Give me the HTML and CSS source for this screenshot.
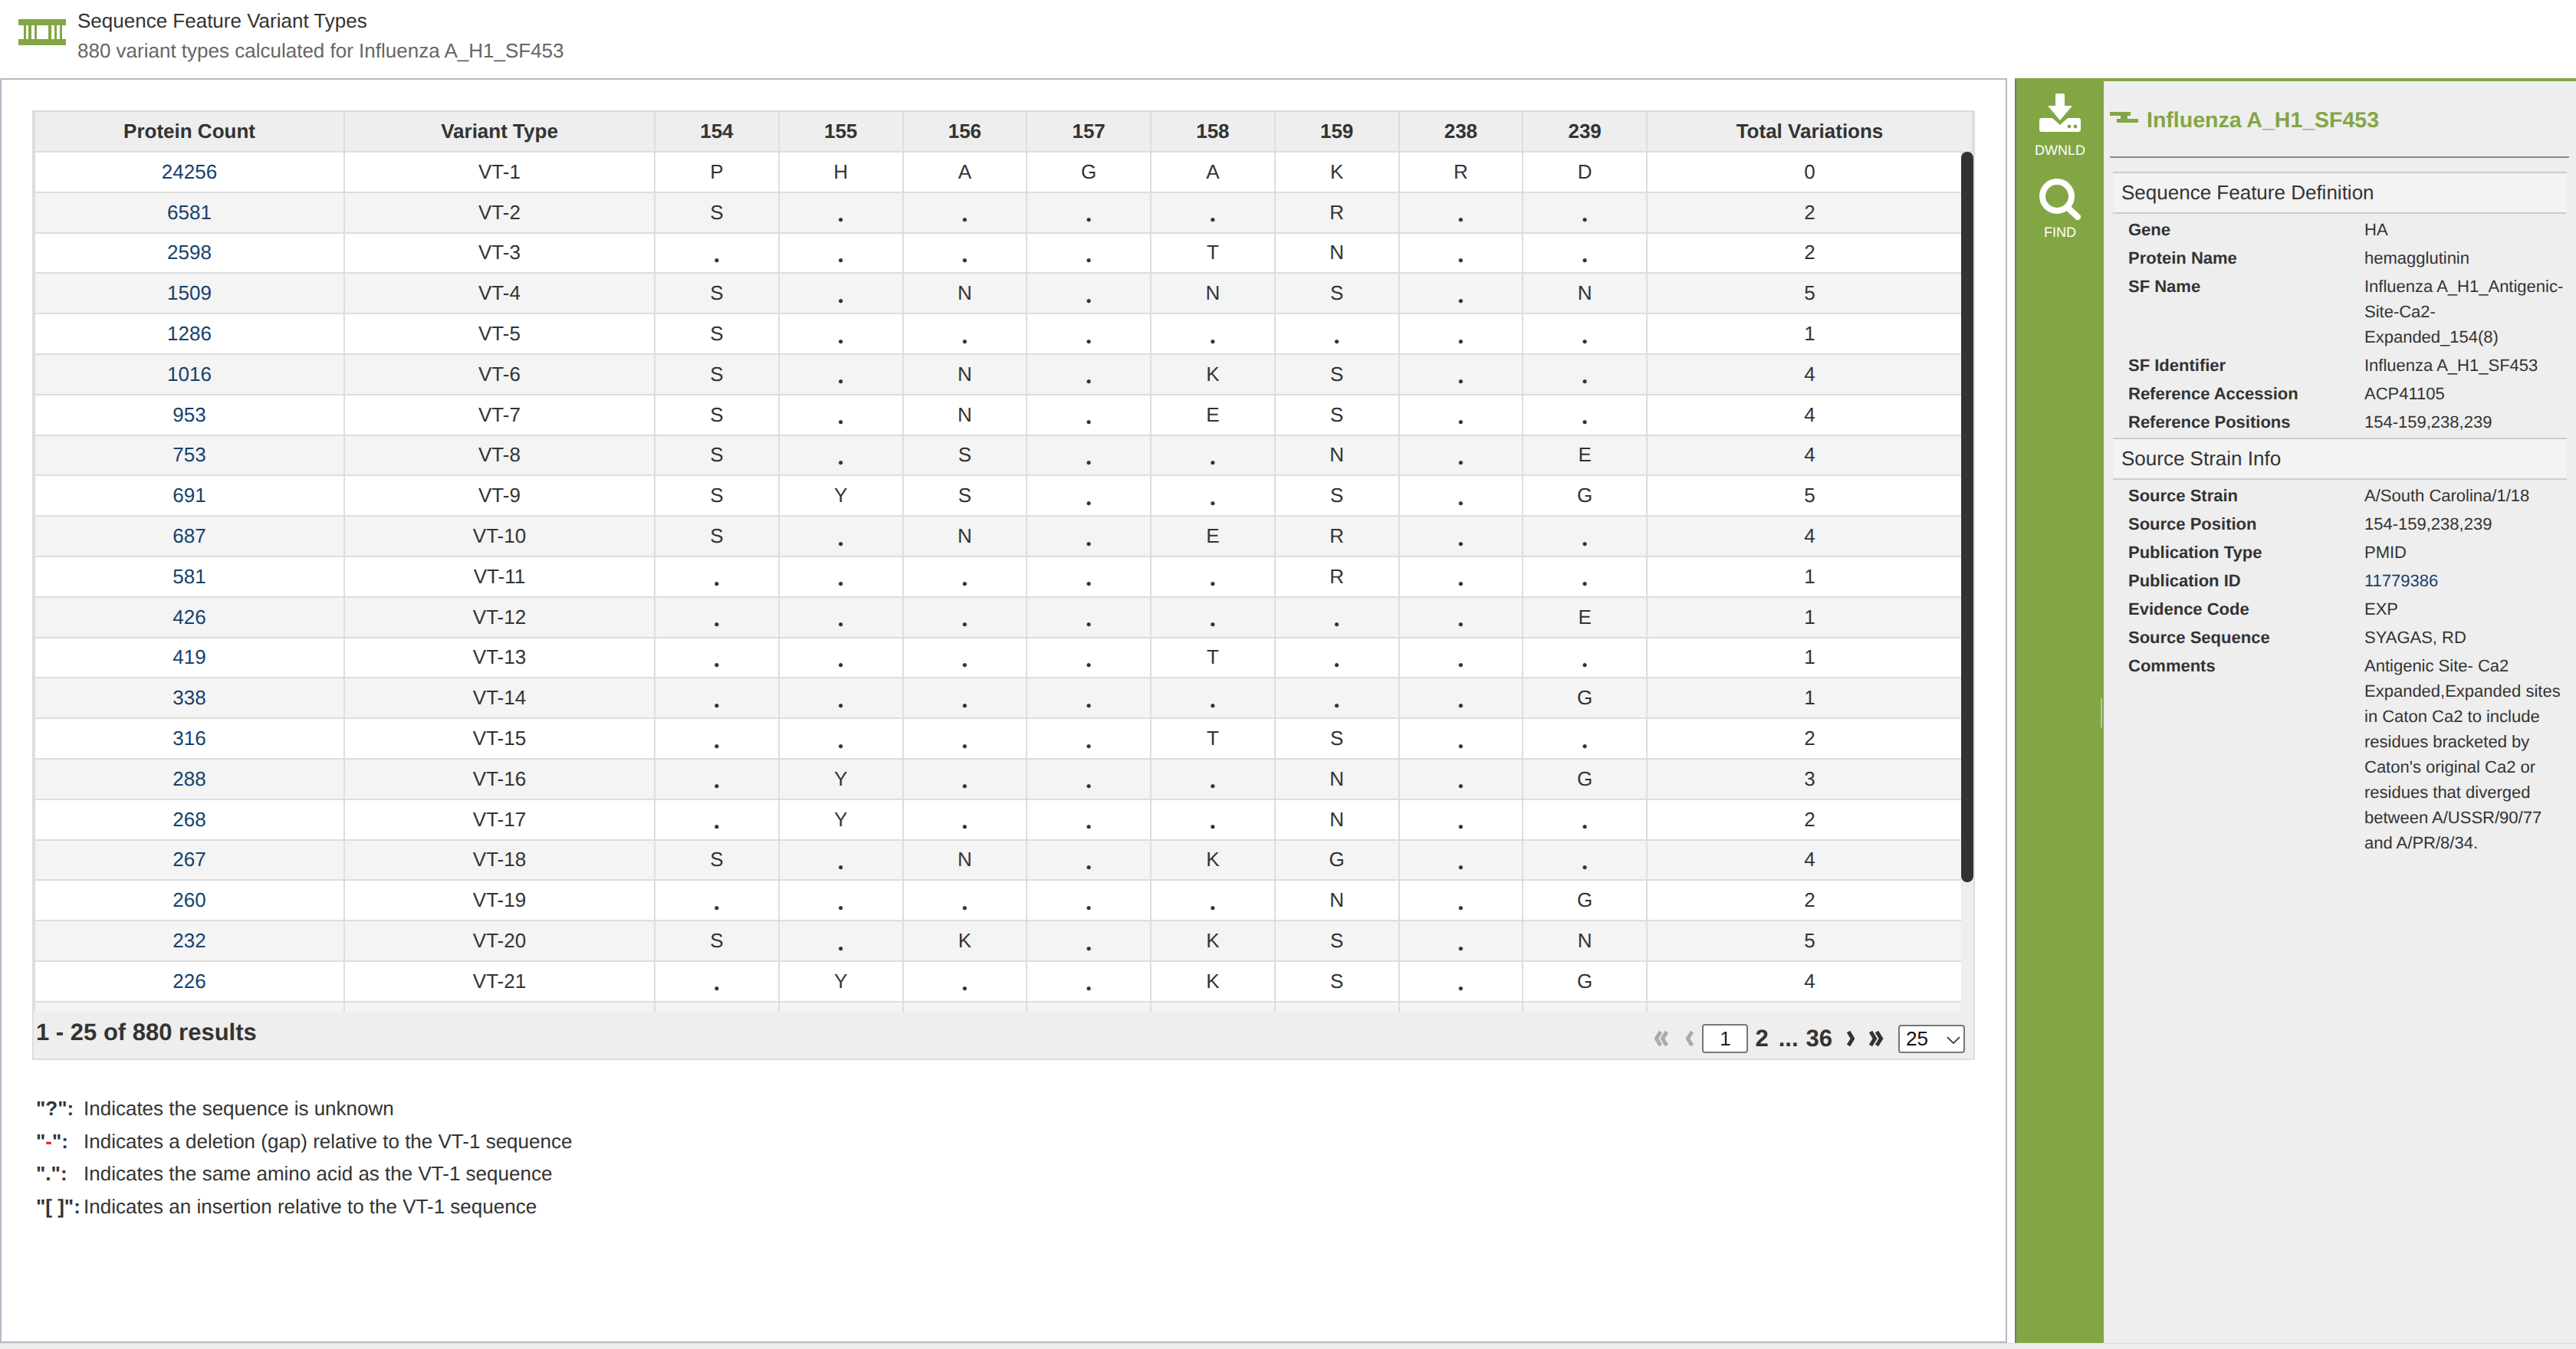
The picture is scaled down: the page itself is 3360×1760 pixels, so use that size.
FILE: index.html
```html
<!DOCTYPE html>
<html>
<head>
  <title>Sequence Feature Variant Types</title>
  <link rel="stylesheet" href="styles.css">
</head>
<body>
  <div class="page-header">
    <svg class="header-icon" width="62" height="34" viewBox="0 0 62 34">
      <rect x="0" y="0" width="62" height="8" fill="#83a645"/>
      <rect x="0" y="26" width="62" height="8" fill="#83a645"/>
      <rect x="7" y="8" width="3" height="18" fill="#83a645"/>
      <rect x="13" y="8" width="4" height="18" fill="#83a645"/>
      <rect x="21" y="8" width="3" height="18" fill="#83a645"/>
      <rect x="39" y="8" width="4" height="18" fill="#83a645"/>
      <rect x="47" y="8" width="3" height="18" fill="#83a645"/>
      <rect x="54" y="8" width="3" height="18" fill="#83a645"/>
    </svg>
    <div>
      <div class="page-title">Sequence Feature Variant Types</div>
      <div class="page-subtitle">880 variant types calculated for Influenza A_H1_SF453</div>
    </div>
  </div>

  <div class="main">
    <div class="content">
      <div class="grid-wrap">
        <div class="grid-scroll">
          <table class="grid">
            <colgroup>
              <col class="col-first"><col class="col-second">
              <col class="col-pos"><col class="col-pos"><col class="col-pos"><col class="col-pos">
              <col class="col-pos"><col class="col-pos"><col class="col-pos"><col class="col-pos">
              <col class="col-total">
            </colgroup>
            <thead>
              <tr><th>Protein Count</th><th>Variant Type</th><th>154</th><th>155</th><th>156</th><th>157</th><th>158</th><th>159</th><th>238</th><th>239</th><th>Total Variations</th></tr>
            </thead>
            <tbody>
              <tr><td><a href="#">24256</a></td><td>VT-1</td><td>P</td><td>H</td><td>A</td><td>G</td><td>A</td><td>K</td><td>R</td><td>D</td><td>0</td></tr>
              <tr><td><a href="#">6581</a></td><td>VT-2</td><td>S</td><td class="dot">.</td><td class="dot">.</td><td class="dot">.</td><td class="dot">.</td><td>R</td><td class="dot">.</td><td class="dot">.</td><td>2</td></tr>
              <tr><td><a href="#">2598</a></td><td>VT-3</td><td class="dot">.</td><td class="dot">.</td><td class="dot">.</td><td class="dot">.</td><td>T</td><td>N</td><td class="dot">.</td><td class="dot">.</td><td>2</td></tr>
              <tr><td><a href="#">1509</a></td><td>VT-4</td><td>S</td><td class="dot">.</td><td>N</td><td class="dot">.</td><td>N</td><td>S</td><td class="dot">.</td><td>N</td><td>5</td></tr>
              <tr><td><a href="#">1286</a></td><td>VT-5</td><td>S</td><td class="dot">.</td><td class="dot">.</td><td class="dot">.</td><td class="dot">.</td><td class="dot">.</td><td class="dot">.</td><td class="dot">.</td><td>1</td></tr>
              <tr><td><a href="#">1016</a></td><td>VT-6</td><td>S</td><td class="dot">.</td><td>N</td><td class="dot">.</td><td>K</td><td>S</td><td class="dot">.</td><td class="dot">.</td><td>4</td></tr>
              <tr><td><a href="#">953</a></td><td>VT-7</td><td>S</td><td class="dot">.</td><td>N</td><td class="dot">.</td><td>E</td><td>S</td><td class="dot">.</td><td class="dot">.</td><td>4</td></tr>
              <tr><td><a href="#">753</a></td><td>VT-8</td><td>S</td><td class="dot">.</td><td>S</td><td class="dot">.</td><td class="dot">.</td><td>N</td><td class="dot">.</td><td>E</td><td>4</td></tr>
              <tr><td><a href="#">691</a></td><td>VT-9</td><td>S</td><td>Y</td><td>S</td><td class="dot">.</td><td class="dot">.</td><td>S</td><td class="dot">.</td><td>G</td><td>5</td></tr>
              <tr><td><a href="#">687</a></td><td>VT-10</td><td>S</td><td class="dot">.</td><td>N</td><td class="dot">.</td><td>E</td><td>R</td><td class="dot">.</td><td class="dot">.</td><td>4</td></tr>
              <tr><td><a href="#">581</a></td><td>VT-11</td><td class="dot">.</td><td class="dot">.</td><td class="dot">.</td><td class="dot">.</td><td class="dot">.</td><td>R</td><td class="dot">.</td><td class="dot">.</td><td>1</td></tr>
              <tr><td><a href="#">426</a></td><td>VT-12</td><td class="dot">.</td><td class="dot">.</td><td class="dot">.</td><td class="dot">.</td><td class="dot">.</td><td class="dot">.</td><td class="dot">.</td><td>E</td><td>1</td></tr>
              <tr><td><a href="#">419</a></td><td>VT-13</td><td class="dot">.</td><td class="dot">.</td><td class="dot">.</td><td class="dot">.</td><td>T</td><td class="dot">.</td><td class="dot">.</td><td class="dot">.</td><td>1</td></tr>
              <tr><td><a href="#">338</a></td><td>VT-14</td><td class="dot">.</td><td class="dot">.</td><td class="dot">.</td><td class="dot">.</td><td class="dot">.</td><td class="dot">.</td><td class="dot">.</td><td>G</td><td>1</td></tr>
              <tr><td><a href="#">316</a></td><td>VT-15</td><td class="dot">.</td><td class="dot">.</td><td class="dot">.</td><td class="dot">.</td><td>T</td><td>S</td><td class="dot">.</td><td class="dot">.</td><td>2</td></tr>
              <tr><td><a href="#">288</a></td><td>VT-16</td><td class="dot">.</td><td>Y</td><td class="dot">.</td><td class="dot">.</td><td class="dot">.</td><td>N</td><td class="dot">.</td><td>G</td><td>3</td></tr>
              <tr><td><a href="#">268</a></td><td>VT-17</td><td class="dot">.</td><td>Y</td><td class="dot">.</td><td class="dot">.</td><td class="dot">.</td><td>N</td><td class="dot">.</td><td class="dot">.</td><td>2</td></tr>
              <tr><td><a href="#">267</a></td><td>VT-18</td><td>S</td><td class="dot">.</td><td>N</td><td class="dot">.</td><td>K</td><td>G</td><td class="dot">.</td><td class="dot">.</td><td>4</td></tr>
              <tr><td><a href="#">260</a></td><td>VT-19</td><td class="dot">.</td><td class="dot">.</td><td class="dot">.</td><td class="dot">.</td><td class="dot">.</td><td>N</td><td class="dot">.</td><td>G</td><td>2</td></tr>
              <tr><td><a href="#">232</a></td><td>VT-20</td><td>S</td><td class="dot">.</td><td>K</td><td class="dot">.</td><td>K</td><td>S</td><td class="dot">.</td><td>N</td><td>5</td></tr>
              <tr><td><a href="#">226</a></td><td>VT-21</td><td class="dot">.</td><td>Y</td><td class="dot">.</td><td class="dot">.</td><td>K</td><td>S</td><td class="dot">.</td><td>G</td><td>4</td></tr>
              <tr><td></td><td></td><td></td><td></td><td></td><td></td><td></td><td></td><td></td><td></td><td></td></tr>
            </tbody>
          </table>
        </div>
        <div class="scroll-track"><div class="scroll-thumb"></div></div>
        <div class="grid-footer">
          <div class="result-count">1 - 25 of 880 results</div>
          <div class="pager">
            <svg class="chev-double" width="19" height="20" viewBox="0 0 19 20"><path d="M9 1 3.5 10 9 19M17 1l-5.500 9 5.500 9" fill="none" stroke="#aaa" stroke-width="5"/></svg>
            <svg class="chev-prev" width="12" height="20" viewBox="0 0 12 20"><path d="M9 1 3.500 10 9 19" fill="none" stroke="#aaa" stroke-width="5"/></svg>
            <input class="page-input" type="text" value="1">
            <span class="page-two">2</span>
            <span class="page-dots">...</span>
            <span class="page-last">36</span>
            <svg class="chev-next" width="11" height="20" viewBox="0 0 11 20"><path d="M3 1l5.500 9L3 19" fill="none" stroke="#333" stroke-width="5"/></svg>
            <svg class="chev-double" width="19" height="20" viewBox="0 0 19 20"><path d="M2 1l5.500 9L2 19M10 1l5.500 9L10 19" fill="none" stroke="#333" stroke-width="5"/></svg>
            <div class="size-select">
              <select><option>25</option><option>50</option><option>100</option></select>
              <svg class="select-arrow" width="18" height="10" viewBox="0 0 18 10"><path d="M1 1l8 8 8-8" fill="none" stroke="#222" stroke-width="1.6"/></svg>
            </div>
          </div>
        </div>
      </div>

      <div class="legend">
        <b>"?":</b><span>Indicates the sequence is unknown</span>
        <b>"<span class="red">-</span>":</b><span>Indicates a deletion (gap) relative to the VT-1 sequence</span>
        <b>".":</b><span>Indicates the same amino acid as the VT-1 sequence</span>
        <b>"[ ]":</b><span>Indicates an insertion relative to the VT-1 sequence</span>
      </div>
    </div>

    <div class="side">
      <div class="toolbar">
        <div class="tool">
          <svg width="54" height="50" viewBox="0 0 54 50">
            <path d="M21 2a2 2 0 0 1 2-2h8a2 2 0 0 1 2 2v14h10L27 35 11 16h10z" fill="#fff"/>
            <path d="M3 32h14l10 9 10-9h14a3 3 0 0 1 3 3v12a3 3 0 0 1-3 3H3a3 3 0 0 1-3-3V35a3 3 0 0 1 3-3z" fill="#fff"/>
            <circle cx="39" cy="43" r="2.4" fill="#83a645"/>
            <circle cx="47" cy="43" r="2.4" fill="#83a645"/>
          </svg>
          <span>DWNLD</span>
        </div>
        <div class="tool tool-find">
          <svg width="54" height="54" viewBox="0 0 54 54">
            <circle cx="23" cy="23" r="19" fill="none" stroke="#fff" stroke-width="8"/>
            <path d="M36 37l14 13" fill="none" stroke="#fff" stroke-width="8" stroke-linecap="round"/>
          </svg>
          <span>FIND</span>
        </div>
        <div class="splitter"></div>
      </div>

      <div class="details">
        <div class="details-title">
          <svg width="37" height="14" viewBox="0 0 37 14">
            <rect x="0" y="0" width="27" height="5" fill="#83a645"/>
            <rect x="14" y="5" width="9" height="4" fill="#83a645"/>
            <rect x="9" y="9" width="28" height="5" fill="#83a645"/>
          </svg>
          <span>Influenza A_H1_SF453</span>
        </div>

        <div class="section-head">Sequence Feature Definition</div>
        <div class="info">
          <b>Gene</b><span>HA</span>
          <b>Protein Name</b><span>hemagglutinin</span>
          <b>SF Name</b><span>Influenza A_H1_Antigenic-<br>Site-Ca2-<br>Expanded_154(8)</span>
          <b>SF Identifier</b><span>Influenza A_H1_SF453</span>
          <b>Reference Accession</b><span>ACP41105</span>
          <b>Reference Positions</b><span>154-159,238,239</span>
        </div>

        <div class="section-head">Source Strain Info</div>
        <div class="info">
          <b>Source Strain</b><span>A/South Carolina/1/18</span>
          <b>Source Position</b><span>154-159,238,239</span>
          <b>Publication Type</b><span>PMID</span>
          <b>Publication ID</b><span><a href="#">11779386</a></span>
          <b>Evidence Code</b><span>EXP</span>
          <b>Source Sequence</b><span>SYAGAS, RD</span>
          <b>Comments</b><span>Antigenic Site- Ca2<br>Expanded,Expanded sites<br>in Caton Ca2 to include<br>residues bracketed by<br>Caton's original Ca2 or<br>residues that diverged<br>between A/USSR/90/77<br>and A/PR/8/34.</span>
        </div>
      </div>
    </div>
  </div>

  <div class="page-bottom"></div>
</body>
</html>
```

FILE: styles.css
```css
html, body {
  margin: 0;
  height: 1760px;
  overflow: hidden;
}

body {
  font-family: "Liberation Sans", Arial, sans-serif;
  font-size: 26px;
  color: #333;
  background: #fff;
  text-rendering: geometricPrecision;
}

a {
  color: #16416e;
  text-decoration: none;
}

/* page header */
.page-header {
  height: 102px;
  box-sizing: border-box;
  display: flex;
  align-items: flex-start;
  padding: 8px 0 0 24px;
  gap: 15px;
}

.header-icon {
  margin-top: 17px;
}

.page-title {
  line-height: 39px;
}

.page-subtitle {
  line-height: 39px;
  color: #666;
}

/* main split */
.main {
  display: flex;
  height: 1650px;
}

.content {
  width: 2618px;
  box-sizing: border-box;
  border: 2px solid #b5bac8;
  padding: 40px 0 0 40px;
}

.side {
  margin-left: 10px;
  flex: 1;
  display: flex;
  border-left: 2px solid #777;
  border-top: 4px solid #83a645;
}

.page-bottom {
  height: 8px;
  box-sizing: border-box;
  background: #eee;
  border-top: 2px solid #e2e2e2;
}

/* grid */
.grid-wrap {
  position: relative;
  width: 2534px;
  box-sizing: border-box;
  border: 2px solid #ddd;
  background: #eee;
}

.grid-scroll {
  height: 1174px;
  overflow: hidden;
}

.grid {
  table-layout: fixed;
  border-collapse: separate;
  border-spacing: 0;
  width: 2528px;
  background: #fff;
}

.col-first {
  width: 404px;
}

.col-second {
  width: 405px;
}

.col-pos {
  width: 161.75px;
}

.col-total {
  width: 425px;
}

.grid th,
.grid td {
  box-sizing: border-box;
  padding: 0;
  text-align: center;
  border-left: 2px solid #ddd;
  border-bottom: 2px solid #ddd;
}

.grid th {
  height: 53px;
  font-weight: bold;
  background: #eee;
}

.grid th:last-child {
  box-shadow: 2px 0 0 #ddd;
}

.grid td {
  height: 52.8px;
}

.grid tbody tr:nth-child(even) td {
  background: #f4f4f4;
}

.grid td.dot {
  font-family: Lato, sans-serif;
  font-weight: bold;
  font-size: 34px;
  line-height: 26px;
}

.scroll-track {
  position: absolute;
  top: 53px;
  right: 0;
  width: 16px;
  height: 1121px;
  background: #eee;
}

.scroll-thumb {
  position: absolute;
  top: -1px;
  left: 0;
  width: 16px;
  height: 953px;
  border-radius: 8px;
  background: #333;
}

.grid-footer {
  display: flex;
  justify-content: space-between;
  height: 61px;
}

.result-count {
  font-weight: bold;
  font-size: 31px;
  line-height: 54px;
  padding-left: 3px;
}

.pager {
  display: flex;
  align-items: center;
  height: 38px;
  margin-top: 16px;
  padding-right: 11px;
  font-size: 31px;
  font-weight: bold;
}

.pager svg {
  display: block;
}

.chev-prev {
  margin-left: 22px;
}

.chev-next {
  margin-left: 18px;
}

.chev-next + .chev-double {
  margin-left: 19px;
}

.page-input {
  width: 60px;
  height: 38px;
  box-sizing: border-box;
  margin: 0 9px 0 10px;
  padding: 0;
  border: 2px solid #777;
  border-radius: 4px;
  background: #fff;
  font: 26px "Liberation Sans", Arial, sans-serif;
  color: #222;
  text-align: center;
}

.page-dots {
  margin-left: 13px;
}

.page-last {
  margin-left: 10px;
}

.size-select {
  position: relative;
  margin-left: 19px;
}

.size-select select {
  display: block;
  appearance: none;
  width: 87px;
  height: 37px;
  box-sizing: border-box;
  padding: 0 0 0 8px;
  border: 2px solid #777;
  border-radius: 4px;
  background: #fff;
  font: 26px "Liberation Sans", Arial, sans-serif;
  color: #111;
}

.select-arrow {
  position: absolute;
  top: 15px;
  right: 6px;
  pointer-events: none;
}

/* legend under the grid */
.legend {
  display: grid;
  grid-template-columns: 62px 1fr;
  line-height: 42.7px;
  margin: 42px 0 0 5px;
}

.red {
  color: #e2231a;
}

/* green toolbar */
.toolbar {
  position: relative;
  width: 114px;
  flex: none;
  background: #83a645;
  color: #fff;
  font-size: 18px;
  padding-top: 16px;
  box-sizing: border-box;
}

.tool {
  display: flex;
  flex-direction: column;
  align-items: center;
}

.tool span {
  line-height: 28px;
  margin-top: 10px;
}

.tool-find {
  margin-top: 23px;
}

.tool-find span {
  margin-top: 2px;
}

.splitter {
  position: absolute;
  top: 805px;
  right: 2px;
  width: 2px;
  height: 38px;
  background: #bbb;
}

/* details panel */
.details {
  flex: 1;
  background: #eee;
  padding: 0 9px 0 8px;
  font-size: 22px;
}

.details-title {
  height: 100px;
  box-sizing: border-box;
  border-bottom: 2px solid #888;
  display: flex;
  align-items: flex-start;
  gap: 11px;
  padding-top: 34px;
  font-size: 28.5px;
  line-height: 34px;
  font-weight: bold;
  color: #83a645;
}

.details-title svg {
  margin-top: 6px;
}

.section-head {
  height: 55px;
  box-sizing: border-box;
  margin: 18px 3px 0 4px;
  padding-left: 11px;
  border-top: 2px solid #ccc;
  border-bottom: 2px solid #ccc;
  background: #f3f3f3;
  font-size: 26px;
  line-height: 51px;
}

.info + .section-head {
  margin-top: 0;
}

.info {
  display: grid;
  grid-template-columns: 308px 1fr;
  row-gap: 4px;
  margin-left: 24px;
  padding: 4px 0;
  line-height: 33px;
}
```
